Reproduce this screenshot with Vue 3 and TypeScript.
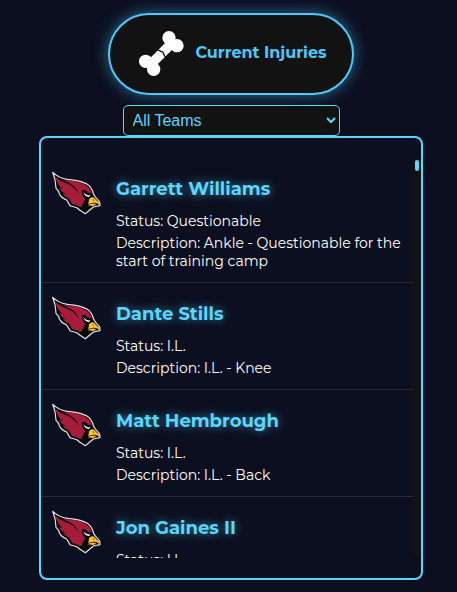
<script setup lang="ts">
import { computed, ref } from 'vue'

interface Injury {
  name: string
  team: string
  status: string
  description: string
}

const injuries: Injury[] = [
  { name: 'Garrett Williams', team: 'ARI', status: 'Questionable', description: 'Ankle - Questionable for the start of training camp' },
  { name: 'Dante Stills', team: 'ARI', status: 'I.L.', description: 'I.L. - Knee' },
  { name: 'Matt Hembrough', team: 'ARI', status: 'I.L.', description: 'I.L. - Back' },
  { name: 'Jon Gaines II', team: 'ARI', status: 'I.L.', description: 'I.L. - Knee' },
]

const team = ref('all')
const visible = computed(() => injuries.filter((i) => team.value === 'all' || i.team === team.value))
</script>

<template>
  <main class="page">
    <button class="title" type="button">
      <svg class="bone" viewBox="15 24 150 150" aria-hidden="true">
        <g fill="#fff">
          <circle cx="117" cy="50" r="20" />
          <circle cx="141" cy="74" r="20" />
          <circle cx="47" cy="121" r="20" />
          <circle cx="71" cy="145" r="20" />
        </g>
        <path d="M129 63 L59 133" stroke="#fff" stroke-width="29" />
        <path d="M78 88 C86 83 91 93 96 92 C103 95 99 102 107 109" fill="none" stroke="#121212" stroke-width="4" />
      </svg>
      <span>Current Injuries</span>
    </button>

    <select v-model="team" class="teams" aria-label="Team">
      <option value="all">All Teams</option>
      <option value="ARI">Arizona Cardinals</option>
    </select>

    <section class="panel">
      <ul class="list">
        <li v-for="injury in visible" :key="injury.name" class="item">
          <svg class="logo" viewBox="33 24 150 150" aria-hidden="true">
            <path d="M38 37 C50 49 63 55 83 58 C108 60 126 63 142 73 C153 81 158 91 161 103 C165 112 173 119 179 126 L180 137 L160 141 L136 161 L119 150 C108 138 98 141 90 137 L80 120 C66 114 57 103 56 94 L48 85 C48 68 44 52 38 37 Z" fill="#090909" stroke="#e4e4e8" stroke-width="3.6" stroke-linejoin="round" />
            <path d="M44 48 C54 59 64 64 77 69 C91 75 102 81 110 92 C119 102 118 108 115 114 C120 125 116 133 120 142 C112 134 103 135 96 132 L88 116 C78 112 71 106 68 100 L80 104 C68 97 61 92 57 84 L68 87 C55 77 50 64 44 48 Z" fill="#a71c3b" />
            <path d="M68 60 C107 62 131 67 145 82 C151 88 154 94 155 101 L146 98 L134 90 C128 88 125 92 126 98 C128 110 132 114 137 117 C130 124 127 132 125 141 L105 132 C112 120 117 112 115 98 C108 80 92 69 68 60 Z" fill="#a71c3b" />
            <path d="M126 90 L155 106 L150 113 C138 113 129 105 126 90 Z" fill="#090909" />
            <path d="M130 97 C136 104 142 107 151 106 L148 111 C139 112 133 106 130 97 Z" fill="#f2f2f2" />
            <path d="M137 98 L145 102 L142 105 Z" fill="#090909" />
            <path d="M147 119 C153 109 163 110 168 120 L178 128 L177 135 C170 127 163 127 145 132 Z" fill="#f7c233" />
            <path d="M145 134 C155 130 163 129 169 134 L160 138 L143 136 Z" fill="#f2b92b" />
            <path d="M158 119 L163 121" stroke="#3a2505" stroke-width="2" />
          </svg>
          <div class="info">
            <h3>{{ injury.name }}</h3>
            <p>Status: {{ injury.status }}</p>
            <p>Description: {{ injury.description }}</p>
          </div>
        </li>
      </ul>
      <div class="track" aria-hidden="true"><div class="thumb"></div></div>
    </section>
  </main>
</template>

<style>
body {
  background: #0c0f20;
}
</style>

<style scoped>
.page {
  display: flex;
  flex-direction: column;
  align-items: center;
  padding: 13px 34px 12px 39px;
  font-family: Montserrat, Inter, sans-serif;
  color: #fff;
}

.title {
  display: flex;
  align-items: center;
  gap: 10px;
  padding: 14px 25px;
  border: 2px solid #4dc9ff;
  border-radius: 41px;
  background: #121212;
  box-shadow: 0 0 15px rgba(77, 201, 255, 0.5);
  color: #4dc9ff;
  font-family: inherit;
  font-size: 16px;
  font-weight: 700;
  line-height: 20px;
  white-space: nowrap;
}

.title span {
  padding-bottom: 2px;
}

.bone {
  width: 50px;
  height: 50px;
}

.teams {
  width: 217px;
  height: 31px;
  margin-top: 10px;
  padding: 0 5px;
  border: 1px solid #5ad7ff;
  border-radius: 5px;
  background: #121212;
  color: #5ad7ff;
  font-family: "Liberation Sans", Arial, sans-serif;
  font-size: 16px;
}

.panel {
  box-sizing: border-box;
  display: flex;
  width: 100%;
  padding: 20px 0;
  border: 2px solid #5ad7ff;
  border-radius: 8px;
}

.list {
  flex: 1;
  height: 400px;
  margin: 0;
  padding: 0;
  overflow-y: auto;
  scrollbar-width: none;
  list-style: none;
}

.track {
  width: 8px;
  box-sizing: border-box;
  padding: 2px;
  background: #121212;
}

.thumb {
  height: 11px;
  border-radius: 2px;
  background: #5ad7ff;
}

.item {
  display: flex;
  gap: 15px;
  padding: 10px;
  border-bottom: 1px solid #2b2c30;
}

.logo {
  flex: none;
  width: 50px;
  height: 50px;
}

.info {
  flex: 1;
  padding: 10px 0 2px;
}

h3 {
  margin: 0 0 11px;
  color: #5ad7ff;
  font-size: 18px;
  font-weight: 700;
  line-height: 23px;
  text-shadow: 0 0 10px rgba(90, 215, 255, 0.6);
}

p {
  margin: 0;
  font-size: 14px;
  line-height: 18px;
}

p + p {
  margin-top: 4px;
}
</style>
